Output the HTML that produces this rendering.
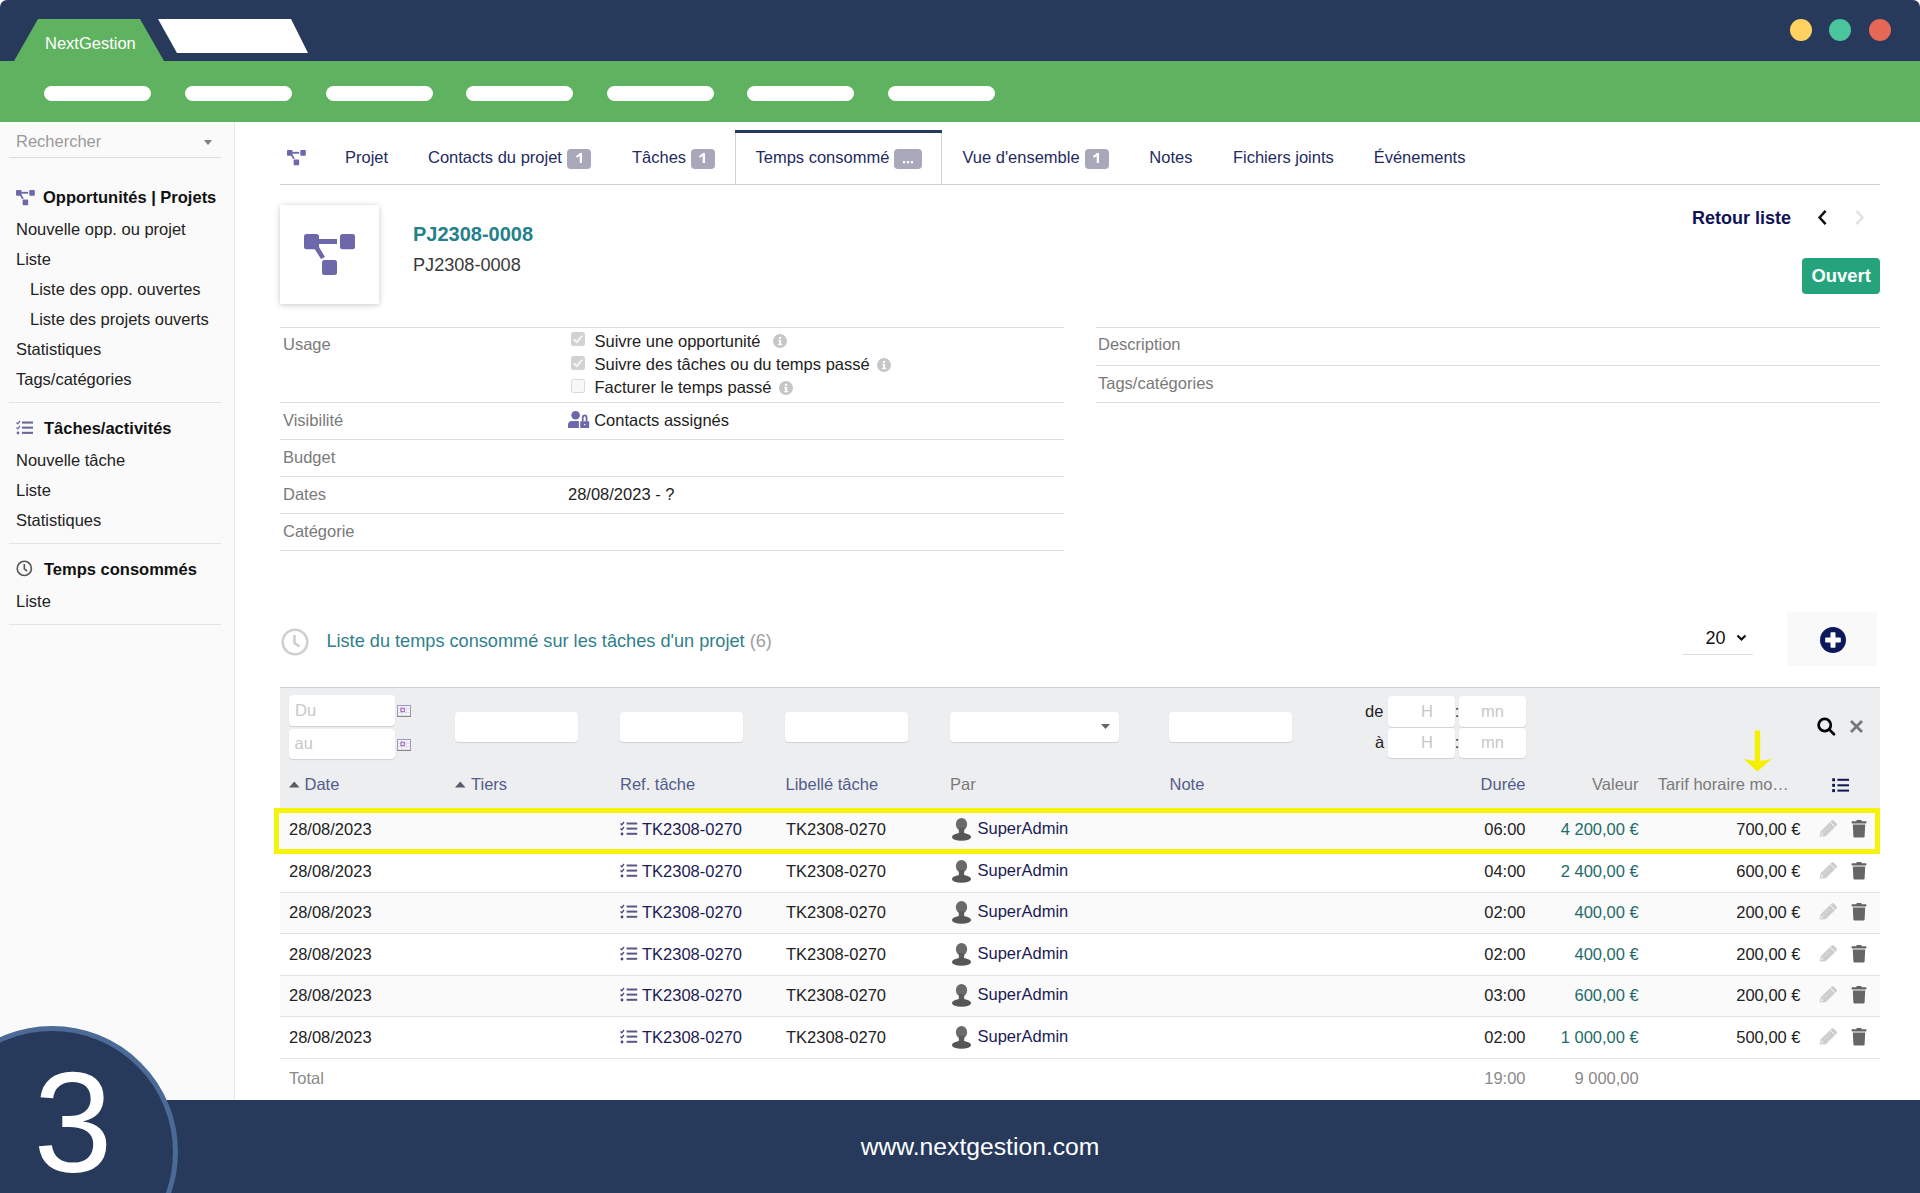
<!DOCTYPE html>
<html><head><meta charset="utf-8"><title>NextGestion</title>
<style>
html,body{margin:0;padding:0;}
body{width:1920px;height:1193px;overflow:hidden;position:relative;background:#fff;font-family:"Liberation Sans", sans-serif;}
.t{position:absolute;white-space:pre;}
</style></head><body>
<div style="position:absolute;left:0px;top:0px;width:1920px;height:61px;background:#273a5c;border-radius:7px 7px 0 0"></div>
<svg style="position:absolute;left:0;top:0" width="400" height="61">
<polygon points="14,61 38,19 140,19 164,61" fill="#5fb25f"/>
<polygon points="158,19 291,19 308,53 177,53" fill="#fff"/>
</svg>
<div class="t" style="left:45px;top:34px;font-size:16.5px;line-height:19.8px;color:#fff;font-weight:normal;">NextGestion</div>
<div style="position:absolute;left:1790px;top:19px;width:22px;height:22px;background:#fdd261;border-radius:50%"></div>
<div style="position:absolute;left:1829px;top:19px;width:22px;height:22px;background:#4cc49e;border-radius:50%"></div>
<div style="position:absolute;left:1869px;top:19px;width:22px;height:22px;background:#e66756;border-radius:50%"></div>
<div style="position:absolute;left:0px;top:61px;width:1920px;height:61px;background:#5fb25f"></div>
<div style="position:absolute;left:44px;top:86px;width:107px;height:15px;background:#fff;border-radius:8px"></div>
<div style="position:absolute;left:185px;top:86px;width:107px;height:15px;background:#fff;border-radius:8px"></div>
<div style="position:absolute;left:326px;top:86px;width:107px;height:15px;background:#fff;border-radius:8px"></div>
<div style="position:absolute;left:466px;top:86px;width:107px;height:15px;background:#fff;border-radius:8px"></div>
<div style="position:absolute;left:607px;top:86px;width:107px;height:15px;background:#fff;border-radius:8px"></div>
<div style="position:absolute;left:747px;top:86px;width:107px;height:15px;background:#fff;border-radius:8px"></div>
<div style="position:absolute;left:888px;top:86px;width:107px;height:15px;background:#fff;border-radius:8px"></div>
<div style="position:absolute;left:0px;top:122px;width:234px;height:978px;background:#fafafa;border-right:1px solid #e6e6e6"></div>
<div class="t" style="left:16px;top:132px;font-size:16.5px;line-height:19.8px;color:#9a9a9a;font-weight:normal;">Rechercher</div>
<svg style="position:absolute;left:204px;top:140px" width="9" height="6"><polygon points="0,0 8,0 4,5" fill="#808080"/></svg>
<div style="position:absolute;left:9px;top:157px;width:212px;height:1px;background:#dcdcdc"></div>
<svg style="position:absolute;left:16px;top:190px" width="19.2" height="15.5" viewBox="0 0 52 42">
<rect x="0" y="0" width="15" height="15.3" rx="2.5" fill="#6c68a9"/>
<rect x="36" y="0" width="15" height="15.3" rx="2.5" fill="#6c68a9"/>
<rect x="18" y="26" width="15" height="15" rx="2.5" fill="#6c68a9"/>
<rect x="14" y="5" width="19" height="5" fill="#6c68a9"/>
<polygon points="10,14 15,13 21,23 17,25" fill="#6c68a9"/>
</svg>
<div class="t" style="left:43px;top:188px;font-size:16.5px;line-height:19.8px;color:#111;font-weight:bold;">Opportunités | Projets</div>
<div class="t" style="left:16px;top:220px;font-size:16.5px;line-height:19.8px;color:#222;font-weight:normal;">Nouvelle opp. ou projet</div>
<div class="t" style="left:16px;top:250px;font-size:16.5px;line-height:19.8px;color:#222;font-weight:normal;">Liste</div>
<div class="t" style="left:30px;top:280px;font-size:16.5px;line-height:19.8px;color:#222;font-weight:normal;">Liste des opp. ouvertes</div>
<div class="t" style="left:30px;top:310px;font-size:16.5px;line-height:19.8px;color:#222;font-weight:normal;">Liste des projets ouverts</div>
<div class="t" style="left:16px;top:340px;font-size:16.5px;line-height:19.8px;color:#222;font-weight:normal;">Statistiques</div>
<div class="t" style="left:16px;top:370px;font-size:16.5px;line-height:19.8px;color:#222;font-weight:normal;">Tags/catégories</div>
<div style="position:absolute;left:9px;top:402px;width:212px;height:1px;background:#e4e4e4"></div>
<svg style="position:absolute;left:16px;top:420px" width="18" height="15" viewBox="0 0 18 15">
<path d="M0.5 2.5 L1.8 3.8 L4 1" stroke="#6c68a9" stroke-width="1.3" fill="none"/>
<path d="M0.5 7.5 L1.8 8.8 L4 6" stroke="#6c68a9" stroke-width="1.3" fill="none"/>
<circle cx="2" cy="13" r="1.4" fill="#6c68a9"/>
<rect x="6" y="1.5" width="11" height="2.1" fill="#6a6898"/>
<rect x="6" y="6.6" width="11" height="2.1" fill="#6a6898"/>
<rect x="6" y="11.8" width="11" height="2.1" fill="#6a6898"/>
</svg>
<div class="t" style="left:44px;top:419px;font-size:16.5px;line-height:19.8px;color:#111;font-weight:bold;">Tâches/activités</div>
<div class="t" style="left:16px;top:451px;font-size:16.5px;line-height:19.8px;color:#222;font-weight:normal;">Nouvelle tâche</div>
<div class="t" style="left:16px;top:481px;font-size:16.5px;line-height:19.8px;color:#222;font-weight:normal;">Liste</div>
<div class="t" style="left:16px;top:511px;font-size:16.5px;line-height:19.8px;color:#222;font-weight:normal;">Statistiques</div>
<div style="position:absolute;left:9px;top:543px;width:212px;height:1px;background:#e4e4e4"></div>
<svg style="position:absolute;left:16px;top:560px" width="18" height="18" viewBox="0 0 18 18">
<circle cx="8.3" cy="8.4" r="7.1" stroke="#555" stroke-width="1.6" fill="none"/>
<path d="M8.3 4 V8.8 L11.2 11.2" stroke="#555" stroke-width="1.6" fill="none"/>
</svg>
<div class="t" style="left:44px;top:560px;font-size:16.5px;line-height:19.8px;color:#111;font-weight:bold;">Temps consommés</div>
<div class="t" style="left:16px;top:592px;font-size:16.5px;line-height:19.8px;color:#222;font-weight:normal;">Liste</div>
<div style="position:absolute;left:9px;top:624px;width:212px;height:1px;background:#e4e4e4"></div>
<svg style="position:absolute;left:287px;top:150px" width="19.2" height="15.5" viewBox="0 0 52 42">
<rect x="0" y="0" width="15" height="15.3" rx="2.5" fill="#6c68a9"/>
<rect x="36" y="0" width="15" height="15.3" rx="2.5" fill="#6c68a9"/>
<rect x="18" y="26" width="15" height="15" rx="2.5" fill="#6c68a9"/>
<rect x="14" y="5" width="19" height="5" fill="#6c68a9"/>
<polygon points="10,14 15,13 21,23 17,25" fill="#6c68a9"/>
</svg>
<div style="position:absolute;left:735px;top:130px;width:207px;height:55px;background:#fff;border-left:1px solid #d2d2d2;border-right:1px solid #d2d2d2;box-sizing:border-box"></div>
<div style="position:absolute;left:735px;top:130px;width:207px;height:3px;background:#273a5c"></div>
<div style="position:absolute;left:280px;top:184px;width:1600px;height:1px;background:#cfcfcf"></div>
<div class="t" style="left:345px;top:148px;font-size:16.5px;line-height:19.8px;color:#1f2b5e;font-weight:normal;">Projet</div>
<div class="t" style="left:428px;top:148px;font-size:16.5px;line-height:19.8px;color:#1f2b5e;font-weight:normal;">Contacts du projet</div>
<div style="position:absolute;left:567px;top:149px;width:24px;height:20px;background:#a9a8ba;border-radius:4px"></div>
<svg style="position:absolute;left:575.8px;top:153px" width="7" height="10" viewBox="0 0 7 10"><path d="M3.7 0 H6 V10 H3.7 V3 Q2.3 4.2 0.3 4.8 V2.7 Q2.6 1.8 3.7 0 Z" fill="#fff"/></svg>
<div class="t" style="left:632px;top:148px;font-size:16.5px;line-height:19.8px;color:#1f2b5e;font-weight:normal;">Tâches</div>
<div style="position:absolute;left:690.5px;top:149px;width:24px;height:20px;background:#a9a8ba;border-radius:4px"></div>
<svg style="position:absolute;left:699.3px;top:153px" width="7" height="10" viewBox="0 0 7 10"><path d="M3.7 0 H6 V10 H3.7 V3 Q2.3 4.2 0.3 4.8 V2.7 Q2.6 1.8 3.7 0 Z" fill="#fff"/></svg>
<div class="t" style="left:755.5px;top:148px;font-size:16.5px;line-height:19.8px;color:#1f2b5e;font-weight:normal;">Temps consommé</div>
<div style="position:absolute;left:894px;top:149px;width:28px;height:20px;background:#a9a8ba;border-radius:4px"></div>
<svg style="position:absolute;left:902.0px;top:160.5px" width="12" height="3" viewBox="0 0 12 3"><rect x="1" y="0" width="2.2" height="2.3" fill="#fff"/><rect x="4.9" y="0" width="2.2" height="2.3" fill="#fff"/><rect x="8.8" y="0" width="2.2" height="2.3" fill="#fff"/></svg>
<div class="t" style="left:962.4px;top:148px;font-size:16.5px;line-height:19.8px;color:#1f2b5e;font-weight:normal;">Vue d'ensemble</div>
<div style="position:absolute;left:1084.5px;top:149px;width:24px;height:20px;background:#a9a8ba;border-radius:4px"></div>
<svg style="position:absolute;left:1093.3px;top:153px" width="7" height="10" viewBox="0 0 7 10"><path d="M3.7 0 H6 V10 H3.7 V3 Q2.3 4.2 0.3 4.8 V2.7 Q2.6 1.8 3.7 0 Z" fill="#fff"/></svg>
<div class="t" style="left:1149.3px;top:148px;font-size:16.5px;line-height:19.8px;color:#1f2b5e;font-weight:normal;">Notes</div>
<div class="t" style="left:1232.9px;top:148px;font-size:16.5px;line-height:19.8px;color:#1f2b5e;font-weight:normal;">Fichiers joints</div>
<div class="t" style="left:1373.7px;top:148px;font-size:16.5px;line-height:19.8px;color:#1f2b5e;font-weight:normal;">Événements</div>
<div style="position:absolute;left:280px;top:205px;width:99px;height:99px;background:#fff;box-shadow:0 1px 6px rgba(0,0,0,0.22)"></div>
<svg style="position:absolute;left:304px;top:234px" width="52.0" height="42.0" viewBox="0 0 52 42">
<rect x="0" y="0" width="15" height="15.3" rx="2.5" fill="#6c68a9"/>
<rect x="36" y="0" width="15" height="15.3" rx="2.5" fill="#6c68a9"/>
<rect x="18" y="26" width="15" height="15" rx="2.5" fill="#6c68a9"/>
<rect x="14" y="5" width="19" height="5" fill="#6c68a9"/>
<polygon points="10,14 15,13 21,23 17,25" fill="#6c68a9"/>
</svg>
<div class="t" style="left:413px;top:222px;font-size:20px;line-height:24.0px;color:#24808a;font-weight:bold;">PJ2308-0008</div>
<div class="t" style="left:413px;top:255px;font-size:18.12px;line-height:21.74px;color:#3a3a3a;font-weight:normal;">PJ2308-0008</div>
<div class="t" style="left:1692px;top:208px;font-size:18px;line-height:21.6px;color:#101255;font-weight:bold;">Retour liste</div>
<svg style="position:absolute;left:1816px;top:209px" width="12" height="17" viewBox="0 0 12 17"><path d="M9.6 1.8 L3.6 8.5 L9.6 15.2" stroke="#111" stroke-width="2.5" fill="none"/></svg>
<svg style="position:absolute;left:1854px;top:209px" width="12" height="17" viewBox="0 0 12 17"><path d="M2.4 1.8 L8.4 8.5 L2.4 15.2" stroke="#e2e2e2" stroke-width="2.5" fill="none"/></svg>
<div style="position:absolute;left:1802px;top:258px;width:78px;height:36px;background:#25a47c;border-radius:4px"></div>
<div class="t" style="left:1811.5px;top:265px;font-size:18.4px;line-height:22.08px;color:#fff;font-weight:bold;">Ouvert</div>
<div style="position:absolute;left:280px;top:327px;width:784px;height:1px;background:#dedede"></div>
<div style="position:absolute;left:280px;top:402px;width:784px;height:1px;background:#dedede"></div>
<div style="position:absolute;left:280px;top:439px;width:784px;height:1px;background:#dedede"></div>
<div style="position:absolute;left:280px;top:476px;width:784px;height:1px;background:#dedede"></div>
<div style="position:absolute;left:280px;top:513px;width:784px;height:1px;background:#dedede"></div>
<div style="position:absolute;left:280px;top:550px;width:784px;height:1px;background:#dedede"></div>
<div class="t" style="left:283px;top:335px;font-size:16.5px;line-height:19.8px;color:#7a7a7a;font-weight:normal;">Usage</div>
<div class="t" style="left:283px;top:411px;font-size:16.5px;line-height:19.8px;color:#7a7a7a;font-weight:normal;">Visibilité</div>
<div class="t" style="left:283px;top:448px;font-size:16.5px;line-height:19.8px;color:#7a7a7a;font-weight:normal;">Budget</div>
<div class="t" style="left:283px;top:485px;font-size:16.5px;line-height:19.8px;color:#7a7a7a;font-weight:normal;">Dates</div>
<div class="t" style="left:283px;top:522px;font-size:16.5px;line-height:19.8px;color:#7a7a7a;font-weight:normal;">Catégorie</div>
<div style="position:absolute;left:571px;top:332px;width:14px;height:14px;background:#d2d2d2;border-radius:2.5px"></div>
<svg style="position:absolute;left:571px;top:332px" width="14" height="14"><path d="M2.8 7.2 L5.8 10.2 L11.2 3.6" stroke="#f4f4f4" stroke-width="2" fill="none"/></svg>
<div class="t" style="left:594.5px;top:332px;font-size:16.5px;line-height:19.8px;color:#222;font-weight:normal;">Suivre une opportunité</div>
<svg style="position:absolute;left:772.5px;top:334.3px" width="14" height="14" viewBox="0 0 14 14"><circle cx="7" cy="7" r="7" fill="#c6c6c6"/><rect x="6" y="6" width="2.2" height="5" fill="#fff"/><rect x="5.2" y="6" width="2" height="1.2" fill="#fff"/><rect x="5.2" y="10" width="4" height="1.2" fill="#fff"/><circle cx="7.1" cy="3.9" r="1.2" fill="#fff"/></svg>
<div style="position:absolute;left:571px;top:356px;width:14px;height:14px;background:#d2d2d2;border-radius:2.5px"></div>
<svg style="position:absolute;left:571px;top:356px" width="14" height="14"><path d="M2.8 7.2 L5.8 10.2 L11.2 3.6" stroke="#f4f4f4" stroke-width="2" fill="none"/></svg>
<div class="t" style="left:594.5px;top:355px;font-size:16.5px;line-height:19.8px;color:#222;font-weight:normal;">Suivre des tâches ou du temps passé</div>
<svg style="position:absolute;left:877px;top:357.5px" width="14" height="14" viewBox="0 0 14 14"><circle cx="7" cy="7" r="7" fill="#c6c6c6"/><rect x="6" y="6" width="2.2" height="5" fill="#fff"/><rect x="5.2" y="6" width="2" height="1.2" fill="#fff"/><rect x="5.2" y="10" width="4" height="1.2" fill="#fff"/><circle cx="7.1" cy="3.9" r="1.2" fill="#fff"/></svg>
<div style="position:absolute;left:571px;top:379px;width:14px;height:14px;background:#f8f8f8;border:1px solid #dadada;border-radius:2.5px;box-sizing:border-box"></div>
<div class="t" style="left:594.5px;top:378px;font-size:16.5px;line-height:19.8px;color:#222;font-weight:normal;">Facturer le temps passé</div>
<svg style="position:absolute;left:778.7px;top:380.7px" width="14" height="14" viewBox="0 0 14 14"><circle cx="7" cy="7" r="7" fill="#c6c6c6"/><rect x="6" y="6" width="2.2" height="5" fill="#fff"/><rect x="5.2" y="6" width="2" height="1.2" fill="#fff"/><rect x="5.2" y="10" width="4" height="1.2" fill="#fff"/><circle cx="7.1" cy="3.9" r="1.2" fill="#fff"/></svg>
<svg style="position:absolute;left:568px;top:411px" width="22" height="17" viewBox="0 0 22 17"><circle cx="7.6" cy="4.3" r="4.3" fill="#6c68a9"/><path d="M0 17 V14 Q0 10 4 10 H10.9 V17 Z" fill="#6c68a9"/><rect x="12.2" y="10.2" width="9" height="6.8" rx="0.8" fill="#6c68a9"/><path d="M14.7 10.6 V7 A1.95 2.6 0 0 1 18.6 7 V10.6" stroke="#6c68a9" stroke-width="1.8" fill="none"/><path d="M16.7 12.7 L17.6 13.6 L16.7 14.5 L15.8 13.6 Z" fill="#fff"/></svg>
<div class="t" style="left:594.2px;top:411px;font-size:16.5px;line-height:19.8px;color:#222;font-weight:normal;">Contacts assignés</div>
<div class="t" style="left:568px;top:485px;font-size:16.5px;line-height:19.8px;color:#222;font-weight:normal;">28/08/2023 - ?</div>
<div style="position:absolute;left:1096px;top:327px;width:784px;height:1px;background:#dedede"></div>
<div style="position:absolute;left:1096px;top:365px;width:784px;height:1px;background:#dedede"></div>
<div style="position:absolute;left:1096px;top:402px;width:784px;height:1px;background:#dedede"></div>
<div class="t" style="left:1098px;top:335px;font-size:16.5px;line-height:19.8px;color:#7a7a7a;font-weight:normal;">Description</div>
<div class="t" style="left:1098px;top:374px;font-size:16.5px;line-height:19.8px;color:#7a7a7a;font-weight:normal;">Tags/catégories</div>
<svg style="position:absolute;left:281px;top:628px" width="28" height="28" viewBox="0 0 28 28"><circle cx="14" cy="14" r="12.3" stroke="#cfcfcf" stroke-width="2.6" fill="none"/><path d="M13.5 7 V15 L18.5 18.5" stroke="#cfcfcf" stroke-width="2.6" fill="none"/></svg>
<div class="t" style="left:326.4px;top:631px;font-size:18.17px;line-height:21.8px;color:#2f7f8b;font-weight:normal;">Liste du temps consommé sur les tâches d'un projet <span style="color:#a0a0a0">(6)</span></div>
<div class="t" style="left:1705.6px;top:628px;font-size:18px;line-height:21.6px;color:#111;font-weight:normal;">20</div>
<svg style="position:absolute;left:1736px;top:634px" width="11" height="8" viewBox="0 0 11 8"><path d="M1.5 1.5 L5.5 5.5 L9.5 1.5" stroke="#111" stroke-width="2.2" fill="none"/></svg>
<div style="position:absolute;left:1683px;top:654px;width:70px;height:1px;background:#dcdcdc"></div>
<div style="position:absolute;left:1787px;top:612px;width:90px;height:54px;background:#f9f9f9"></div>
<svg style="position:absolute;left:1819.5px;top:627px" width="26" height="26" viewBox="0 0 26 26"><circle cx="13" cy="13" r="13" fill="#0b1a5c"/><rect x="10.5" y="5.2" width="5" height="15.6" rx="0.8" fill="#fff"/><rect x="5.2" y="10.5" width="15.6" height="5" rx="0.8" fill="#fff"/></svg>
<div style="position:absolute;left:280px;top:687px;width:1600px;height:121px;background:#edeef0;border-top:1px solid #cfd0d3;box-sizing:border-box"></div>
<div style="position:absolute;left:289px;top:695px;width:106px;height:31px;background:#fff;border-radius:4px;box-shadow:0 1px 1px rgba(0,0,0,0.12)"></div>
<div class="t" style="left:295px;top:701px;font-size:16.5px;line-height:19.8px;color:#c8c8c8;font-weight:normal;">Du</div>
<div style="position:absolute;left:289px;top:729px;width:106px;height:30px;background:#fff;border-radius:4px;box-shadow:0 1px 1px rgba(0,0,0,0.12)"></div>
<div class="t" style="left:294.5px;top:734px;font-size:16.5px;line-height:19.8px;color:#c8c8c8;font-weight:normal;">au</div>
<svg style="position:absolute;left:397px;top:705px" width="14" height="12" viewBox="0 0 14 12"><rect x="0" y="0" width="14" height="12" fill="#9a98c8"/><rect x="1" y="1" width="12" height="10" fill="#f6f6fa"/><rect x="0" y="10.8" width="14" height="1.2" fill="#8a8a8a"/><path d="M1 4.2 H13 M1 7.5 H13 M4.7 1 V11 M9.3 1 V11" stroke="#dcdcdc" stroke-width="0.9"/><rect x="3.9" y="3.2" width="3.4" height="3.4" fill="none" stroke="#a060b8" stroke-width="1"/></svg>
<svg style="position:absolute;left:397px;top:739px" width="14" height="12" viewBox="0 0 14 12"><rect x="0" y="0" width="14" height="12" fill="#9a98c8"/><rect x="1" y="1" width="12" height="10" fill="#f6f6fa"/><rect x="0" y="10.8" width="14" height="1.2" fill="#8a8a8a"/><path d="M1 4.2 H13 M1 7.5 H13 M4.7 1 V11 M9.3 1 V11" stroke="#dcdcdc" stroke-width="0.9"/><rect x="3.9" y="3.2" width="3.4" height="3.4" fill="none" stroke="#a060b8" stroke-width="1"/></svg>
<div style="position:absolute;left:455px;top:712px;width:123px;height:30px;background:#fff;border-radius:4px;box-shadow:0 1px 1px rgba(0,0,0,0.12)"></div>
<div style="position:absolute;left:620px;top:712px;width:123px;height:30px;background:#fff;border-radius:4px;box-shadow:0 1px 1px rgba(0,0,0,0.12)"></div>
<div style="position:absolute;left:785px;top:712px;width:123px;height:30px;background:#fff;border-radius:4px;box-shadow:0 1px 1px rgba(0,0,0,0.12)"></div>
<div style="position:absolute;left:950px;top:712px;width:169px;height:30px;background:#fff;border-radius:4px;box-shadow:0 1px 1px rgba(0,0,0,0.12)"></div>
<svg style="position:absolute;left:1101px;top:724px" width="10" height="6"><polygon points="0,0 9,0 4.5,5" fill="#666"/></svg>
<div style="position:absolute;left:1169px;top:712px;width:123px;height:30px;background:#fff;border-radius:4px;box-shadow:0 1px 1px rgba(0,0,0,0.12)"></div>
<div class="t" style="left:1365px;top:702px;font-size:16.5px;line-height:19.8px;color:#222;font-weight:normal;">de</div>
<div class="t" style="left:1375px;top:733px;font-size:16.5px;line-height:19.8px;color:#222;font-weight:normal;">à</div>
<div style="position:absolute;left:1388px;top:696px;width:67px;height:31px;background:#fff;border-radius:4px;box-shadow:0 1px 1px rgba(0,0,0,0.12)"></div>
<div style="position:absolute;left:1459px;top:696px;width:67px;height:31px;background:#fff;border-radius:4px;box-shadow:0 1px 1px rgba(0,0,0,0.12)"></div>
<div style="position:absolute;left:1388px;top:728px;width:67px;height:30px;background:#fff;border-radius:4px;box-shadow:0 1px 1px rgba(0,0,0,0.12)"></div>
<div style="position:absolute;left:1459px;top:728px;width:67px;height:30px;background:#fff;border-radius:4px;box-shadow:0 1px 1px rgba(0,0,0,0.12)"></div>
<div class="t" style="left:927px;width:1000px;text-align:center;top:702px;font-size:16.5px;line-height:19.8px;color:#c8c8c8;font-weight:normal;">H</div>
<div class="t" style="left:992.5px;width:1000px;text-align:center;top:702px;font-size:16.5px;line-height:19.8px;color:#c8c8c8;font-weight:normal;">mn</div>
<div class="t" style="left:927px;width:1000px;text-align:center;top:733px;font-size:16.5px;line-height:19.8px;color:#c8c8c8;font-weight:normal;">H</div>
<div class="t" style="left:992.5px;width:1000px;text-align:center;top:733px;font-size:16.5px;line-height:19.8px;color:#c8c8c8;font-weight:normal;">mn</div>
<div class="t" style="left:957px;width:1000px;text-align:center;top:702px;font-size:16.5px;line-height:19.8px;color:#333;font-weight:normal;">:</div>
<div class="t" style="left:957px;width:1000px;text-align:center;top:733px;font-size:16.5px;line-height:19.8px;color:#333;font-weight:normal;">:</div>
<svg style="position:absolute;left:1816px;top:717px" width="20" height="20" viewBox="0 0 20 20"><circle cx="8.7" cy="8" r="6.1" stroke="#000" stroke-width="2.7" fill="none"/><path d="M13.2 12.4 L18 17.2" stroke="#000" stroke-width="2.7" stroke-linecap="round"/></svg>
<svg style="position:absolute;left:1849px;top:719px" width="15" height="15" viewBox="0 0 15 15"><path d="M2 2 L13 13 M13 2 L2 13" stroke="#777" stroke-width="2.8"/></svg>
<svg style="position:absolute;left:289px;top:780.5px" width="11" height="7"><polygon points="0,6.5 10.5,6.5 5.25,0.5" fill="#5a5a68"/></svg>
<div class="t" style="left:304.5px;top:775px;font-size:16.5px;line-height:19.8px;color:#535c8c;font-weight:normal;">Date</div>
<svg style="position:absolute;left:455px;top:780.5px" width="11" height="7"><polygon points="0,6.5 10.5,6.5 5.25,0.5" fill="#5a5a68"/></svg>
<div class="t" style="left:471px;top:775px;font-size:16.5px;line-height:19.8px;color:#535c8c;font-weight:normal;">Tiers</div>
<div class="t" style="left:620px;top:775px;font-size:16.5px;line-height:19.8px;color:#535c8c;font-weight:normal;">Ref. tâche</div>
<div class="t" style="left:785.5px;top:775px;font-size:16.5px;line-height:19.8px;color:#535c8c;font-weight:normal;">Libellé tâche</div>
<div class="t" style="left:950px;top:775px;font-size:16.5px;line-height:19.8px;color:#7a7a7a;font-weight:normal;">Par</div>
<div class="t" style="left:1169.5px;top:775px;font-size:16.5px;line-height:19.8px;color:#535c8c;font-weight:normal;">Note</div>
<div class="t" style="right:394.5px;text-align:right;top:775px;font-size:16.5px;line-height:19.8px;color:#535c8c;font-weight:normal;">Durée</div>
<div class="t" style="right:281.5px;text-align:right;top:775px;font-size:16.5px;line-height:19.8px;color:#7a7a7a;font-weight:normal;">Valeur</div>
<div class="t" style="left:1657.7px;top:775px;font-size:16.5px;line-height:19.8px;color:#7a7a7a;font-weight:normal;">Tarif horaire mo…</div>
<svg style="position:absolute;left:1832px;top:778px" width="18" height="15" viewBox="0 0 18 15"><rect x="0.2" y="0.3" width="2.8" height="3" fill="#0f1552"/><rect x="0.2" y="5.8" width="2.8" height="3" fill="#0f1552"/><rect x="0.2" y="11.1" width="2.8" height="3" fill="#0f1552"/><rect x="5.4" y="0.8" width="11.6" height="2" fill="#0f1552"/><rect x="5.4" y="6.3" width="11.6" height="2" fill="#0f1552"/><rect x="5.4" y="11.6" width="11.6" height="2" fill="#0f1552"/></svg>
<svg style="position:absolute;left:1743px;top:730px" width="30" height="43" viewBox="0 0 30 43"><rect x="11.8" y="0.5" width="5.3" height="31" fill="#f5f000"/><polygon points="0.7,29 11.8,31 17.1,31 28.4,29 14.4,41.6" fill="#f5f000"/></svg>
<div style="position:absolute;left:280px;top:808px;width:1600px;height:46px;background:#fafafa"></div>
<div class="t" style="left:289px;top:820px;font-size:16.5px;line-height:19.8px;color:#222;font-weight:normal;">28/08/2023</div>
<svg style="position:absolute;left:620px;top:821px" width="18" height="15" viewBox="0 0 18 15"><path d="M0.5 2.5 L1.8 3.8 L4 1" stroke="#45457a" stroke-width="1.3" fill="none"/><path d="M0.5 7.5 L1.8 8.8 L4 6" stroke="#45457a" stroke-width="1.3" fill="none"/><circle cx="2" cy="13" r="1.4" fill="#45457a"/><rect x="6.6" y="1.5" width="10.6" height="2" fill="#585888"/><rect x="6.6" y="6.6" width="10.6" height="2" fill="#585888"/><rect x="6.6" y="11.8" width="10.6" height="2" fill="#585888"/></svg>
<div class="t" style="left:642px;top:820px;font-size:16.5px;line-height:19.8px;color:#1b1b55;font-weight:normal;">TK2308-0270</div>
<div class="t" style="left:786px;top:820px;font-size:16.5px;line-height:19.8px;color:#222;font-weight:normal;">TK2308-0270</div>
<svg style="position:absolute;left:951px;top:817px" width="21" height="25" viewBox="0 0 21 25"><ellipse cx="10.5" cy="7.2" rx="5.6" ry="6.3" fill="#6a6a68"/><rect x="7.8" y="11" width="5.4" height="6" fill="#5a5a58"/><ellipse cx="10.5" cy="19.9" rx="9.6" ry="3.9" fill="#565654"/></svg>
<div class="t" style="left:977.5px;top:819px;font-size:16.5px;line-height:19.8px;color:#1b1b55;font-weight:normal;">SuperAdmin</div>
<div class="t" style="right:394.5px;text-align:right;top:820px;font-size:16.5px;line-height:19.8px;color:#222;font-weight:normal;">06:00</div>
<div class="t" style="right:281.29999999999995px;text-align:right;top:820px;font-size:16.5px;line-height:19.8px;color:#1f6b6b;font-weight:normal;">4 200,00 €</div>
<div class="t" style="right:119.5px;text-align:right;top:820px;font-size:16.5px;line-height:19.8px;color:#222;font-weight:normal;">700,00 €</div>
<svg style="position:absolute;left:1819px;top:819px" width="19" height="18" viewBox="0 0 19 18"><path d="M0.5 17.5 L1.7 12.3 L12.6 1.4 Q13.6 0.4 14.6 1.4 L17.6 4.4 Q18.6 5.4 17.6 6.4 L6.7 17.3 Z" fill="#cdcdcd"/><path d="M11.3 3.2 L15.8 7.7" stroke="#fafafa" stroke-width="1"/><path d="M4 13.8 L10.5 7.3" stroke="#f2f2f2" stroke-width="0.8" stroke-dasharray="1.2 1"/><path d="M1.6 16.4 L2.3 13.6 L4.4 15.7 Z" fill="#f0f0f0"/></svg>
<svg style="position:absolute;left:1850.5px;top:820px" width="16" height="18" viewBox="0 0 16 18"><rect x="5.5" y="0" width="5" height="2" rx="0.5" fill="#636363"/><rect x="0.5" y="1.2" width="15" height="2.2" rx="0.8" fill="#636363"/><path d="M1.8 4.6 H14.2 L13.6 16.4 Q13.5 17.5 12.5 17.5 H3.5 Q2.5 17.5 2.4 16.4 Z" fill="#666"/></svg>
<div style="position:absolute;left:280px;top:854px;width:1600px;height:38px;background:#fff"></div>
<div class="t" style="left:289px;top:862px;font-size:16.5px;line-height:19.8px;color:#222;font-weight:normal;">28/08/2023</div>
<svg style="position:absolute;left:620px;top:863px" width="18" height="15" viewBox="0 0 18 15"><path d="M0.5 2.5 L1.8 3.8 L4 1" stroke="#45457a" stroke-width="1.3" fill="none"/><path d="M0.5 7.5 L1.8 8.8 L4 6" stroke="#45457a" stroke-width="1.3" fill="none"/><circle cx="2" cy="13" r="1.4" fill="#45457a"/><rect x="6.6" y="1.5" width="10.6" height="2" fill="#585888"/><rect x="6.6" y="6.6" width="10.6" height="2" fill="#585888"/><rect x="6.6" y="11.8" width="10.6" height="2" fill="#585888"/></svg>
<div class="t" style="left:642px;top:862px;font-size:16.5px;line-height:19.8px;color:#1b1b55;font-weight:normal;">TK2308-0270</div>
<div class="t" style="left:786px;top:862px;font-size:16.5px;line-height:19.8px;color:#222;font-weight:normal;">TK2308-0270</div>
<svg style="position:absolute;left:951px;top:859px" width="21" height="25" viewBox="0 0 21 25"><ellipse cx="10.5" cy="7.2" rx="5.6" ry="6.3" fill="#6a6a68"/><rect x="7.8" y="11" width="5.4" height="6" fill="#5a5a58"/><ellipse cx="10.5" cy="19.9" rx="9.6" ry="3.9" fill="#565654"/></svg>
<div class="t" style="left:977.5px;top:861px;font-size:16.5px;line-height:19.8px;color:#1b1b55;font-weight:normal;">SuperAdmin</div>
<div class="t" style="right:394.5px;text-align:right;top:862px;font-size:16.5px;line-height:19.8px;color:#222;font-weight:normal;">04:00</div>
<div class="t" style="right:281.29999999999995px;text-align:right;top:862px;font-size:16.5px;line-height:19.8px;color:#1f6b6b;font-weight:normal;">2 400,00 €</div>
<div class="t" style="right:119.5px;text-align:right;top:862px;font-size:16.5px;line-height:19.8px;color:#222;font-weight:normal;">600,00 €</div>
<svg style="position:absolute;left:1819px;top:861px" width="19" height="18" viewBox="0 0 19 18"><path d="M0.5 17.5 L1.7 12.3 L12.6 1.4 Q13.6 0.4 14.6 1.4 L17.6 4.4 Q18.6 5.4 17.6 6.4 L6.7 17.3 Z" fill="#cdcdcd"/><path d="M11.3 3.2 L15.8 7.7" stroke="#fafafa" stroke-width="1"/><path d="M4 13.8 L10.5 7.3" stroke="#f2f2f2" stroke-width="0.8" stroke-dasharray="1.2 1"/><path d="M1.6 16.4 L2.3 13.6 L4.4 15.7 Z" fill="#f0f0f0"/></svg>
<svg style="position:absolute;left:1850.5px;top:862px" width="16" height="18" viewBox="0 0 16 18"><rect x="5.5" y="0" width="5" height="2" rx="0.5" fill="#636363"/><rect x="0.5" y="1.2" width="15" height="2.2" rx="0.8" fill="#636363"/><path d="M1.8 4.6 H14.2 L13.6 16.4 Q13.5 17.5 12.5 17.5 H3.5 Q2.5 17.5 2.4 16.4 Z" fill="#666"/></svg>
<div style="position:absolute;left:280px;top:892px;width:1600px;height:41px;background:#fafafa"></div>
<div class="t" style="left:289px;top:903px;font-size:16.5px;line-height:19.8px;color:#222;font-weight:normal;">28/08/2023</div>
<svg style="position:absolute;left:620px;top:904px" width="18" height="15" viewBox="0 0 18 15"><path d="M0.5 2.5 L1.8 3.8 L4 1" stroke="#45457a" stroke-width="1.3" fill="none"/><path d="M0.5 7.5 L1.8 8.8 L4 6" stroke="#45457a" stroke-width="1.3" fill="none"/><circle cx="2" cy="13" r="1.4" fill="#45457a"/><rect x="6.6" y="1.5" width="10.6" height="2" fill="#585888"/><rect x="6.6" y="6.6" width="10.6" height="2" fill="#585888"/><rect x="6.6" y="11.8" width="10.6" height="2" fill="#585888"/></svg>
<div class="t" style="left:642px;top:903px;font-size:16.5px;line-height:19.8px;color:#1b1b55;font-weight:normal;">TK2308-0270</div>
<div class="t" style="left:786px;top:903px;font-size:16.5px;line-height:19.8px;color:#222;font-weight:normal;">TK2308-0270</div>
<svg style="position:absolute;left:951px;top:900px" width="21" height="25" viewBox="0 0 21 25"><ellipse cx="10.5" cy="7.2" rx="5.6" ry="6.3" fill="#6a6a68"/><rect x="7.8" y="11" width="5.4" height="6" fill="#5a5a58"/><ellipse cx="10.5" cy="19.9" rx="9.6" ry="3.9" fill="#565654"/></svg>
<div class="t" style="left:977.5px;top:902px;font-size:16.5px;line-height:19.8px;color:#1b1b55;font-weight:normal;">SuperAdmin</div>
<div class="t" style="right:394.5px;text-align:right;top:903px;font-size:16.5px;line-height:19.8px;color:#222;font-weight:normal;">02:00</div>
<div class="t" style="right:281.29999999999995px;text-align:right;top:903px;font-size:16.5px;line-height:19.8px;color:#1f6b6b;font-weight:normal;">400,00 €</div>
<div class="t" style="right:119.5px;text-align:right;top:903px;font-size:16.5px;line-height:19.8px;color:#222;font-weight:normal;">200,00 €</div>
<svg style="position:absolute;left:1819px;top:902px" width="19" height="18" viewBox="0 0 19 18"><path d="M0.5 17.5 L1.7 12.3 L12.6 1.4 Q13.6 0.4 14.6 1.4 L17.6 4.4 Q18.6 5.4 17.6 6.4 L6.7 17.3 Z" fill="#cdcdcd"/><path d="M11.3 3.2 L15.8 7.7" stroke="#fafafa" stroke-width="1"/><path d="M4 13.8 L10.5 7.3" stroke="#f2f2f2" stroke-width="0.8" stroke-dasharray="1.2 1"/><path d="M1.6 16.4 L2.3 13.6 L4.4 15.7 Z" fill="#f0f0f0"/></svg>
<svg style="position:absolute;left:1850.5px;top:903px" width="16" height="18" viewBox="0 0 16 18"><rect x="5.5" y="0" width="5" height="2" rx="0.5" fill="#636363"/><rect x="0.5" y="1.2" width="15" height="2.2" rx="0.8" fill="#636363"/><path d="M1.8 4.6 H14.2 L13.6 16.4 Q13.5 17.5 12.5 17.5 H3.5 Q2.5 17.5 2.4 16.4 Z" fill="#666"/></svg>
<div style="position:absolute;left:280px;top:933px;width:1600px;height:42px;background:#fff"></div>
<div class="t" style="left:289px;top:945px;font-size:16.5px;line-height:19.8px;color:#222;font-weight:normal;">28/08/2023</div>
<svg style="position:absolute;left:620px;top:946px" width="18" height="15" viewBox="0 0 18 15"><path d="M0.5 2.5 L1.8 3.8 L4 1" stroke="#45457a" stroke-width="1.3" fill="none"/><path d="M0.5 7.5 L1.8 8.8 L4 6" stroke="#45457a" stroke-width="1.3" fill="none"/><circle cx="2" cy="13" r="1.4" fill="#45457a"/><rect x="6.6" y="1.5" width="10.6" height="2" fill="#585888"/><rect x="6.6" y="6.6" width="10.6" height="2" fill="#585888"/><rect x="6.6" y="11.8" width="10.6" height="2" fill="#585888"/></svg>
<div class="t" style="left:642px;top:945px;font-size:16.5px;line-height:19.8px;color:#1b1b55;font-weight:normal;">TK2308-0270</div>
<div class="t" style="left:786px;top:945px;font-size:16.5px;line-height:19.8px;color:#222;font-weight:normal;">TK2308-0270</div>
<svg style="position:absolute;left:951px;top:942px" width="21" height="25" viewBox="0 0 21 25"><ellipse cx="10.5" cy="7.2" rx="5.6" ry="6.3" fill="#6a6a68"/><rect x="7.8" y="11" width="5.4" height="6" fill="#5a5a58"/><ellipse cx="10.5" cy="19.9" rx="9.6" ry="3.9" fill="#565654"/></svg>
<div class="t" style="left:977.5px;top:944px;font-size:16.5px;line-height:19.8px;color:#1b1b55;font-weight:normal;">SuperAdmin</div>
<div class="t" style="right:394.5px;text-align:right;top:945px;font-size:16.5px;line-height:19.8px;color:#222;font-weight:normal;">02:00</div>
<div class="t" style="right:281.29999999999995px;text-align:right;top:945px;font-size:16.5px;line-height:19.8px;color:#1f6b6b;font-weight:normal;">400,00 €</div>
<div class="t" style="right:119.5px;text-align:right;top:945px;font-size:16.5px;line-height:19.8px;color:#222;font-weight:normal;">200,00 €</div>
<svg style="position:absolute;left:1819px;top:944px" width="19" height="18" viewBox="0 0 19 18"><path d="M0.5 17.5 L1.7 12.3 L12.6 1.4 Q13.6 0.4 14.6 1.4 L17.6 4.4 Q18.6 5.4 17.6 6.4 L6.7 17.3 Z" fill="#cdcdcd"/><path d="M11.3 3.2 L15.8 7.7" stroke="#fafafa" stroke-width="1"/><path d="M4 13.8 L10.5 7.3" stroke="#f2f2f2" stroke-width="0.8" stroke-dasharray="1.2 1"/><path d="M1.6 16.4 L2.3 13.6 L4.4 15.7 Z" fill="#f0f0f0"/></svg>
<svg style="position:absolute;left:1850.5px;top:945px" width="16" height="18" viewBox="0 0 16 18"><rect x="5.5" y="0" width="5" height="2" rx="0.5" fill="#636363"/><rect x="0.5" y="1.2" width="15" height="2.2" rx="0.8" fill="#636363"/><path d="M1.8 4.6 H14.2 L13.6 16.4 Q13.5 17.5 12.5 17.5 H3.5 Q2.5 17.5 2.4 16.4 Z" fill="#666"/></svg>
<div style="position:absolute;left:280px;top:975px;width:1600px;height:41px;background:#fafafa"></div>
<div class="t" style="left:289px;top:986px;font-size:16.5px;line-height:19.8px;color:#222;font-weight:normal;">28/08/2023</div>
<svg style="position:absolute;left:620px;top:987px" width="18" height="15" viewBox="0 0 18 15"><path d="M0.5 2.5 L1.8 3.8 L4 1" stroke="#45457a" stroke-width="1.3" fill="none"/><path d="M0.5 7.5 L1.8 8.8 L4 6" stroke="#45457a" stroke-width="1.3" fill="none"/><circle cx="2" cy="13" r="1.4" fill="#45457a"/><rect x="6.6" y="1.5" width="10.6" height="2" fill="#585888"/><rect x="6.6" y="6.6" width="10.6" height="2" fill="#585888"/><rect x="6.6" y="11.8" width="10.6" height="2" fill="#585888"/></svg>
<div class="t" style="left:642px;top:986px;font-size:16.5px;line-height:19.8px;color:#1b1b55;font-weight:normal;">TK2308-0270</div>
<div class="t" style="left:786px;top:986px;font-size:16.5px;line-height:19.8px;color:#222;font-weight:normal;">TK2308-0270</div>
<svg style="position:absolute;left:951px;top:983px" width="21" height="25" viewBox="0 0 21 25"><ellipse cx="10.5" cy="7.2" rx="5.6" ry="6.3" fill="#6a6a68"/><rect x="7.8" y="11" width="5.4" height="6" fill="#5a5a58"/><ellipse cx="10.5" cy="19.9" rx="9.6" ry="3.9" fill="#565654"/></svg>
<div class="t" style="left:977.5px;top:985px;font-size:16.5px;line-height:19.8px;color:#1b1b55;font-weight:normal;">SuperAdmin</div>
<div class="t" style="right:394.5px;text-align:right;top:986px;font-size:16.5px;line-height:19.8px;color:#222;font-weight:normal;">03:00</div>
<div class="t" style="right:281.29999999999995px;text-align:right;top:986px;font-size:16.5px;line-height:19.8px;color:#1f6b6b;font-weight:normal;">600,00 €</div>
<div class="t" style="right:119.5px;text-align:right;top:986px;font-size:16.5px;line-height:19.8px;color:#222;font-weight:normal;">200,00 €</div>
<svg style="position:absolute;left:1819px;top:985px" width="19" height="18" viewBox="0 0 19 18"><path d="M0.5 17.5 L1.7 12.3 L12.6 1.4 Q13.6 0.4 14.6 1.4 L17.6 4.4 Q18.6 5.4 17.6 6.4 L6.7 17.3 Z" fill="#cdcdcd"/><path d="M11.3 3.2 L15.8 7.7" stroke="#fafafa" stroke-width="1"/><path d="M4 13.8 L10.5 7.3" stroke="#f2f2f2" stroke-width="0.8" stroke-dasharray="1.2 1"/><path d="M1.6 16.4 L2.3 13.6 L4.4 15.7 Z" fill="#f0f0f0"/></svg>
<svg style="position:absolute;left:1850.5px;top:986px" width="16" height="18" viewBox="0 0 16 18"><rect x="5.5" y="0" width="5" height="2" rx="0.5" fill="#636363"/><rect x="0.5" y="1.2" width="15" height="2.2" rx="0.8" fill="#636363"/><path d="M1.8 4.6 H14.2 L13.6 16.4 Q13.5 17.5 12.5 17.5 H3.5 Q2.5 17.5 2.4 16.4 Z" fill="#666"/></svg>
<div style="position:absolute;left:280px;top:1016px;width:1600px;height:42px;background:#fff"></div>
<div class="t" style="left:289px;top:1028px;font-size:16.5px;line-height:19.8px;color:#222;font-weight:normal;">28/08/2023</div>
<svg style="position:absolute;left:620px;top:1029px" width="18" height="15" viewBox="0 0 18 15"><path d="M0.5 2.5 L1.8 3.8 L4 1" stroke="#45457a" stroke-width="1.3" fill="none"/><path d="M0.5 7.5 L1.8 8.8 L4 6" stroke="#45457a" stroke-width="1.3" fill="none"/><circle cx="2" cy="13" r="1.4" fill="#45457a"/><rect x="6.6" y="1.5" width="10.6" height="2" fill="#585888"/><rect x="6.6" y="6.6" width="10.6" height="2" fill="#585888"/><rect x="6.6" y="11.8" width="10.6" height="2" fill="#585888"/></svg>
<div class="t" style="left:642px;top:1028px;font-size:16.5px;line-height:19.8px;color:#1b1b55;font-weight:normal;">TK2308-0270</div>
<div class="t" style="left:786px;top:1028px;font-size:16.5px;line-height:19.8px;color:#222;font-weight:normal;">TK2308-0270</div>
<svg style="position:absolute;left:951px;top:1025px" width="21" height="25" viewBox="0 0 21 25"><ellipse cx="10.5" cy="7.2" rx="5.6" ry="6.3" fill="#6a6a68"/><rect x="7.8" y="11" width="5.4" height="6" fill="#5a5a58"/><ellipse cx="10.5" cy="19.9" rx="9.6" ry="3.9" fill="#565654"/></svg>
<div class="t" style="left:977.5px;top:1027px;font-size:16.5px;line-height:19.8px;color:#1b1b55;font-weight:normal;">SuperAdmin</div>
<div class="t" style="right:394.5px;text-align:right;top:1028px;font-size:16.5px;line-height:19.8px;color:#222;font-weight:normal;">02:00</div>
<div class="t" style="right:281.29999999999995px;text-align:right;top:1028px;font-size:16.5px;line-height:19.8px;color:#1f6b6b;font-weight:normal;">1 000,00 €</div>
<div class="t" style="right:119.5px;text-align:right;top:1028px;font-size:16.5px;line-height:19.8px;color:#222;font-weight:normal;">500,00 €</div>
<svg style="position:absolute;left:1819px;top:1027px" width="19" height="18" viewBox="0 0 19 18"><path d="M0.5 17.5 L1.7 12.3 L12.6 1.4 Q13.6 0.4 14.6 1.4 L17.6 4.4 Q18.6 5.4 17.6 6.4 L6.7 17.3 Z" fill="#cdcdcd"/><path d="M11.3 3.2 L15.8 7.7" stroke="#fafafa" stroke-width="1"/><path d="M4 13.8 L10.5 7.3" stroke="#f2f2f2" stroke-width="0.8" stroke-dasharray="1.2 1"/><path d="M1.6 16.4 L2.3 13.6 L4.4 15.7 Z" fill="#f0f0f0"/></svg>
<svg style="position:absolute;left:1850.5px;top:1028px" width="16" height="18" viewBox="0 0 16 18"><rect x="5.5" y="0" width="5" height="2" rx="0.5" fill="#636363"/><rect x="0.5" y="1.2" width="15" height="2.2" rx="0.8" fill="#636363"/><path d="M1.8 4.6 H14.2 L13.6 16.4 Q13.5 17.5 12.5 17.5 H3.5 Q2.5 17.5 2.4 16.4 Z" fill="#666"/></svg>
<div style="position:absolute;left:280px;top:892px;width:1600px;height:1px;background:#e3e3e3"></div>
<div style="position:absolute;left:280px;top:933px;width:1600px;height:1px;background:#e3e3e3"></div>
<div style="position:absolute;left:280px;top:975px;width:1600px;height:1px;background:#e3e3e3"></div>
<div style="position:absolute;left:280px;top:1016px;width:1600px;height:1px;background:#e3e3e3"></div>
<div style="position:absolute;left:280px;top:1058px;width:1600px;height:1px;background:#e3e3e3"></div>
<div style="position:absolute;left:280px;top:1059px;width:1600px;height:41px;background:#fff"></div>
<div class="t" style="left:289px;top:1069px;font-size:16.5px;line-height:19.8px;color:#8a8a8a;font-weight:normal;">Total</div>
<div class="t" style="right:394.5px;text-align:right;top:1069px;font-size:16.5px;line-height:19.8px;color:#8a8a8a;font-weight:normal;">19:00</div>
<div class="t" style="right:281.29999999999995px;text-align:right;top:1069px;font-size:16.5px;line-height:19.8px;color:#8a8a8a;font-weight:normal;">9 000,00</div>
<div style="position:absolute;left:274px;top:808px;width:1606px;height:46px;border:5.5px solid #f7f20a;box-sizing:border-box"></div>
<div style="position:absolute;left:0px;top:1100px;width:1920px;height:93px;background:#273a5c"></div>
<div style="position:absolute;left:-74px;top:1026px;width:252px;height:252px;background:#273a5c;border:5px solid #4b6a95;border-radius:50%;box-sizing:border-box"></div>
<div class="t" style="left:-427px;width:1000px;text-align:center;top:1038px;font-size:142px;line-height:170.4px;color:#fff;font-weight:normal;">3</div>
<div class="t" style="left:480px;width:1000px;text-align:center;top:1132px;font-size:24.7px;line-height:29.64px;color:#fff;font-weight:normal;">www.nextgestion.com</div>
</body></html>
